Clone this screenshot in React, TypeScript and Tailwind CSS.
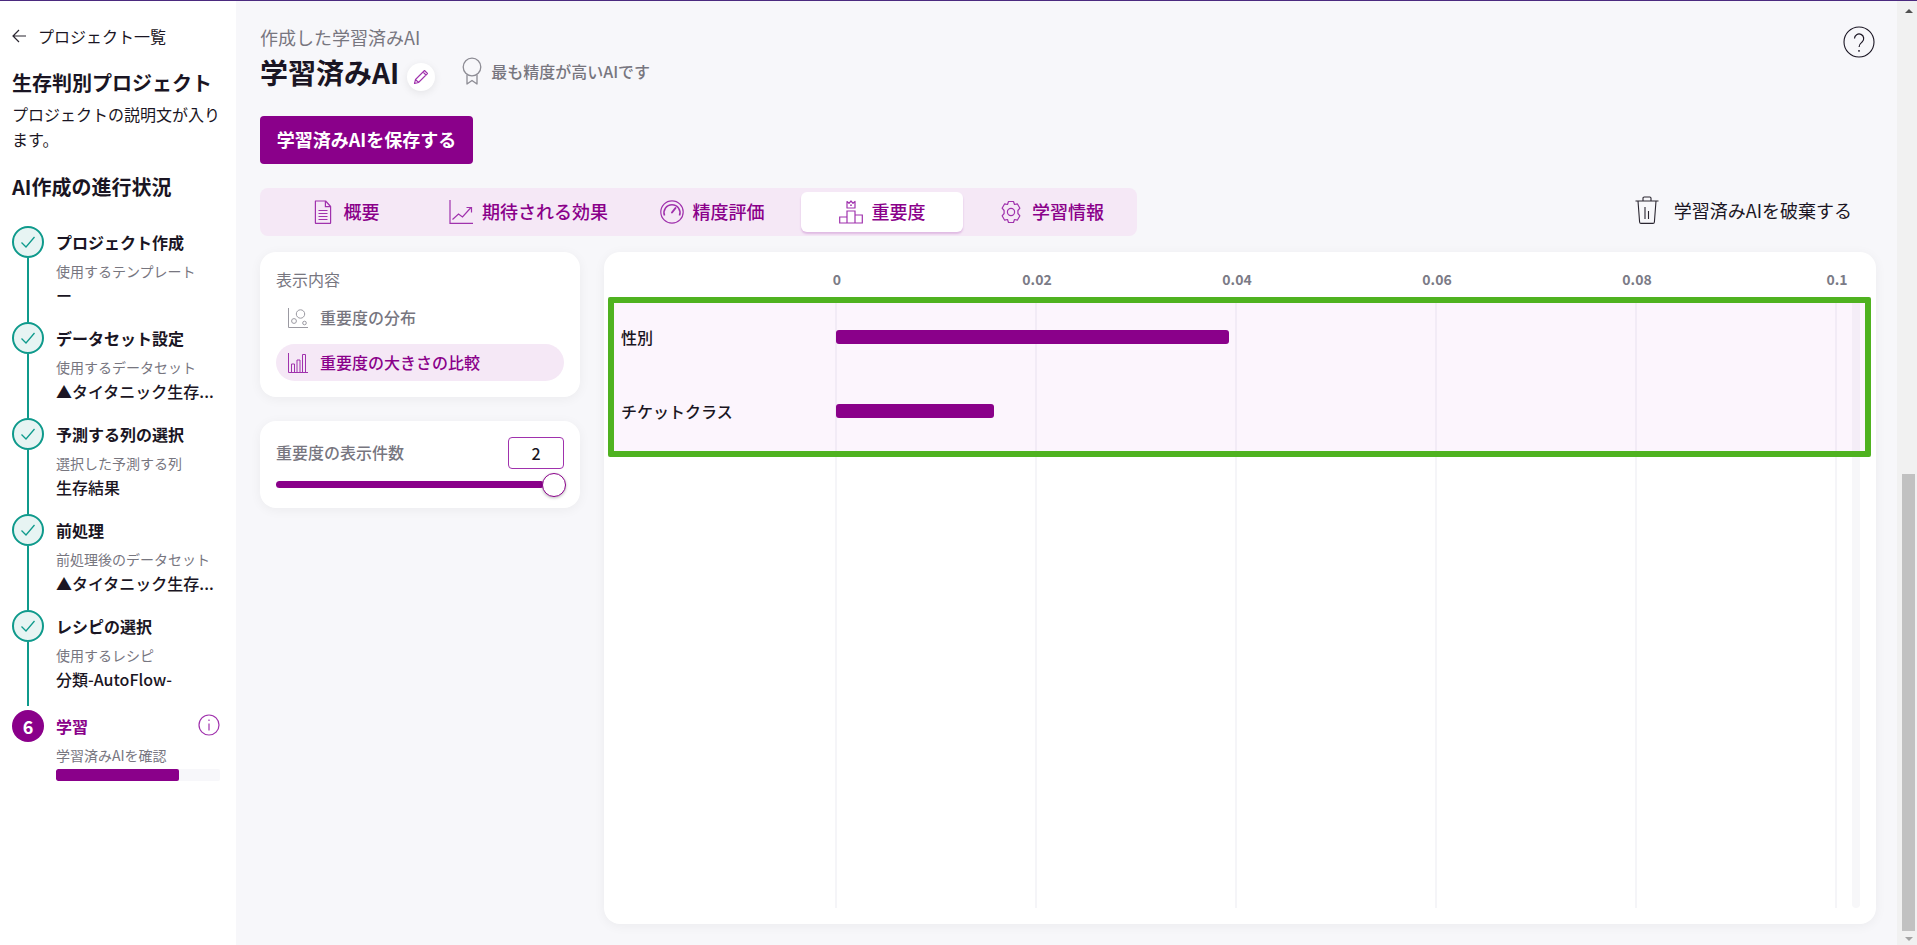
import type { ReactNode } from 'react'

const FONT = '[font-family:"Noto_Sans_CJK_JP","Noto_Sans",sans-serif]'

function DocIcon() {
  return (
    <svg width="24" height="24" viewBox="0 0 24 24" fill="none" stroke="#a032ad" strokeWidth="1.2">
      <path d="M4.6 1h10l5 5.5v16.3a.6.6 0 0 1-.6.6H5a.6.6 0 0 1-.6-.6V1.2z" strokeLinejoin="round" />
      <path d="M14.4 1v5.6h5.2M7.5 10.5h9M7.5 13.5h9M7.5 16.5h9M7.5 19.5h9" />
    </svg>
  )
}

function LineChartIcon() {
  return (
    <svg width="24" height="24" viewBox="0 0 24 24" fill="none" stroke="#a032ad" strokeWidth="1.2">
      <path d="M1 0v23.4h23" />
      <path d="M3.5 19.5l6-5.5 4 3 8.5-9.5M17.5 7.5h5v5" />
    </svg>
  )
}

function GaugeIcon() {
  return (
    <svg width="24" height="24" viewBox="0 0 24 24" fill="none" stroke="#a032ad" strokeWidth="1.2">
      <circle cx="12" cy="12" r="11.2" />
      <path d="M4.5 15.5a8 8 0 1 1 15 0" strokeWidth="1.6" />
      <path d="M12 12.5l3.5-4.5" strokeWidth="2" strokeLinecap="round" />
    </svg>
  )
}

function PodiumIcon() {
  return (
    <svg width="24" height="24" viewBox="0 0 24 24" fill="none" stroke="#a032ad" strokeWidth="1.2">
      <path d="M8 1.5l2 1.8L12 1l2 2.3 2-1.8V8H8z" strokeLinejoin="round" />
      <circle cx="12" cy="5.2" r=".9" fill="#a032ad" stroke="none" />
      <path d="M8 11h8v12H8zM.7 17H8v6H.7zM16 15h7.3v8H16z" />
    </svg>
  )
}

function GearIcon() {
  return (
    <svg width="24" height="24" viewBox="0 0 24 24" fill="none" stroke="#a032ad" strokeWidth="1.2">
      <path
        d="M9.5 1.5h5l1 3 2.8-.7 2.6 4.4-2 2.3v3l2 2.3-2.6 4.4-2.8-.7-1 3h-5l-1-3-2.8.7-2.6-4.4 2-2.3v-3l-2-2.3 2.6-4.4 2.8.7z"
        strokeLinejoin="round"
      />
      <circle cx="12" cy="12" r="3.6" />
    </svg>
  )
}

function CheckCircle() {
  return (
    <div className="w-8 h-8 shrink-0 rounded-full border-2 border-[#0f9a8c] bg-[#e7f4f3] flex items-center justify-center">
      <svg width="18" height="18" viewBox="0 0 18 18" fill="none" stroke="#0f9a8c" strokeWidth="1.3">
        <path d="M2.5 9.5l4.5 4.5 8.5-10" />
      </svg>
    </div>
  )
}

type StepProps = { title: string; sub: string; value: string; last?: boolean }

function Step({ title, sub, value, last }: StepProps) {
  return (
    <div className={`flex gap-3 ${last ? 'h-[100px]' : 'h-24'}`}>
      <div className={`w-8 flex flex-col items-center ${last ? 'pb-1' : ''}`}>
        <CheckCircle />
        <div className="w-[2px] flex-1 bg-[#0f9a8c]" />
      </div>
      <div className="w-[164px] pt-1">
        <div className="text-base font-bold leading-6 text-[#1a1523]">{title}</div>
        <div className="mt-[7px] text-sm leading-5 text-[#77767f]">{sub}</div>
        <div className="mt-[2px] text-base font-medium leading-6 text-[#1a1523] whitespace-nowrap">{value}</div>
      </div>
    </div>
  )
}

function Sidebar() {
  return (
    <aside className="w-[236px] shrink-0 bg-white pl-3 pr-3 pt-[23px]">
      <div className="flex items-center h-6 gap-[11px]">
        <svg width="15" height="14" viewBox="0 0 15 14" fill="none" stroke="#2a2630" strokeWidth="1.2">
          <path d="M14 7H1M7 1L1 7l6 6" />
        </svg>
        <span className="text-base leading-6 text-[#1a1523]">プロジェクト一覧</span>
      </div>
      <h2 className="mt-[19px] text-xl font-bold leading-8 text-[#1a1523]">生存判別プロジェクト</h2>
      <p className="mt-[3px] text-base leading-[25px] text-[#1a1523]">プロジェクトの説明文が入ります。</p>
      <h3 className="mt-5 text-xl font-bold leading-[30px] text-[#1a1523]">AI作成の進行状況</h3>
      <div className="mt-6">
        <Step title="プロジェクト作成" sub="使用するテンプレート" value="ー" />
        <Step title="データセット設定" sub="使用するデータセット" value="▲タイタニック生存..." />
        <Step title="予測する列の選択" sub="選択した予測する列" value="生存結果" />
        <Step title="前処理" sub="前処理後のデータセット" value="▲タイタニック生存..." />
        <Step title="レシピの選択" sub="使用するレシピ" value="分類-AutoFlow-" last />
        <div className="flex gap-3">
          <div className="w-8 h-8 shrink-0 rounded-full bg-[#8a008a] text-white text-lg font-bold flex items-center justify-center">
            6
          </div>
          <div className="w-[164px] pt-1">
            <div className="flex items-center justify-between h-6">
              <span className="text-base font-bold leading-6 text-[#8a008a]">学習</span>
              <svg width="22" height="22" viewBox="0 0 22 22" fill="none" stroke="#a032ad" strokeWidth="1.2" className="-mt-[2px]">
                <circle cx="11" cy="11" r="10" />
                <path d="M11 9.5v7M11 5.5v1.6" />
              </svg>
            </div>
            <div className="mt-[7px] text-sm leading-5 text-[#77767f]">学習済みAIを確認</div>
            <div className="mt-[4px] h-3 rounded-[2px] bg-[#f7f7fa] overflow-hidden">
              <div className="h-full w-[123px] rounded-[2px] bg-[#8a008a]" />
            </div>
          </div>
        </div>
      </div>
    </aside>
  )
}

type TabProps = { icon: ReactNode; label: string; width: string; active?: boolean }

function Tab({ icon, label, width, active }: TabProps) {
  return (
    <div
      className={`${width} h-10 flex items-center justify-center gap-[9px] rounded-md text-lg font-medium text-[#8a008a] ${
        active ? 'bg-white shadow-[0_2px_2px_rgba(160,50,173,0.25)]' : ''
      }`}
    >
      {icon}
      <span className="pb-[2px]">{label}</span>
    </div>
  )
}

function Header() {
  return (
    <div className="flex justify-between">
      <div>
        <div className="text-lg leading-[26px] text-[#77767f]">作成した学習済みAI</div>
        <div className="flex items-center h-10 mt-[2px]">
          <h1 className="text-[28px] font-bold leading-10 text-[#1a1523]">学習済みAI</h1>
          <div className="ml-2 mt-[10px] w-7 h-7 rounded-full bg-white shadow-[0_2px_8px_rgba(0,0,0,0.08)] flex items-center justify-center">
            <svg width="16" height="16" viewBox="0 0 16 16" fill="none" stroke="#a032ad" strokeWidth="1.1">
              <path d="M1.5 14.5l1-4L11.5 1.5l3 3-9 9zM2.5 10.5l3 3M10 3l3 3" strokeLinejoin="round" />
            </svg>
          </div>
          <svg width="22" height="28" viewBox="0 0 22 28" fill="none" stroke="#8d8c94" strokeWidth="1.3" className="ml-[26px] -mt-[2px]">
            <circle cx="11" cy="10" r="8.8" />
            <path d="M6 17.5V27l5-3.5 5 3.5v-9.5" strokeLinejoin="round" />
          </svg>
          <span className="ml-2 pb-[2px] text-base font-medium text-[#77767f]">最も精度が高いAIです</span>
        </div>
        <button className="mt-6 w-[213px] h-12 pb-[3px] rounded bg-[#8a008a] text-white text-lg font-bold">
          学習済みAIを保存する
        </button>
      </div>
      <svg width="32" height="32" viewBox="0 0 32 32" fill="none" stroke="#1a1523" strokeWidth="1.1" className="mt-[2px] mr-[1px]">
        <circle cx="16" cy="16" r="15" />
        <path d="M11.5 12.5a4.6 4.6 0 1 1 7.6 3.5c-1.8 1.5-3 2.4-3 5" strokeWidth="1.2" />
        <path d="M16 24v1.8" strokeWidth="1.4" />
      </svg>
    </div>
  )
}

function Tabs() {
  return (
    <div className="mt-6 flex items-center justify-between">
      <div className="h-12 w-[877px] rounded-lg bg-[#f5e8f6] p-1 flex gap-2">
        <Tab icon={<DocIcon />} label="概要" width="w-[162px]" />
        <Tab icon={<LineChartIcon />} label="期待される効果" width="w-[189px]" />
        <Tab icon={<GaugeIcon />} label="精度評価" width="w-[162px]" />
        <Tab icon={<PodiumIcon />} label="重要度" width="w-[162px]" active />
        <Tab icon={<GearIcon />} label="学習情報" width="w-[161px]" />
      </div>
      <div className="flex items-center gap-[15px] mr-[24px] pb-1 text-lg text-[#1a1523]">
        <svg width="24" height="28" viewBox="0 0 24 28" fill="none" stroke="#2a2630" strokeWidth="1.1">
          <path d="M0.5 5h23M8 5V2.2Q8 1 9.2 1h5.6Q16 1 16 2.2V5M3 5l1.6 21q.1 1.4 1.4 1.4h12q1.3 0 1.4-1.4L21 5" />
          <path d="M10 11v12M13.5 15v8" />
        </svg>
        <span>学習済みAIを破棄する</span>
      </div>
    </div>
  )
}

function DisplayPanel() {
  return (
    <div className="rounded-2xl bg-white px-4 pt-[15px] pb-4 shadow-[0_2px_12px_rgba(0,0,0,0.05)]">
      <div className="text-base leading-6 text-[#77767f]">表示内容</div>
      <div className="mt-2 h-[37px] flex items-center gap-3 pl-3 text-base font-medium text-[#77767f]">
        <svg width="20" height="20" viewBox="0 0 20 20" fill="none" stroke="#9b9aa2" strokeWidth="1">
          <path d="M.5 0v19.5H20" />
          <circle cx="12.5" cy="6" r="4.2" />
          <circle cx="6" cy="13" r="2.4" />
          <circle cx="16.5" cy="15" r="1.8" />
        </svg>
        <span className="pb-[2px]">重要度の分布</span>
      </div>
      <div className="mt-2 h-[37px] flex items-center gap-3 pl-3 rounded-full bg-[#f5e8f6] text-base font-medium text-[#8a008a]">
        <svg width="20" height="20" viewBox="0 0 20 20" fill="none" stroke="#a032ad" strokeWidth="1">
          <path d="M.5 0v19.5H20" />
          <path d="M3.5 11h3v8.5h-3zM9 7h3v12.5H9zM14.5 1.5h3v18h-3z" />
        </svg>
        <span className="pb-[2px]">重要度の大きさの比較</span>
      </div>
    </div>
  )
}

function CountPanel() {
  return (
    <div className="rounded-2xl bg-white px-4 pt-4 pb-[11px] shadow-[0_2px_12px_rgba(0,0,0,0.05)]">
      <div className="flex items-center justify-between">
        <span className="pb-[2px] text-base font-medium text-[#77767f]">重要度の表示件数</span>
        <div className="w-14 h-8 rounded border border-[#a032ad] flex items-center justify-center text-base font-medium text-[#1a1523]">
          2
        </div>
      </div>
      <div className="mt-1 h-6 flex items-center -mr-[2px]">
        <div className="flex-1 h-[7px] mb-[1px] rounded-full bg-[#8a008a]" />
        <div className="-ml-[2px] w-6 h-6 rounded-full bg-white border border-[#8a008a] shadow-[0_1px_3px_rgba(0,0,0,0.25)]" />
      </div>
    </div>
  )
}

const TICKS = ['0', '0.02', '0.04', '0.06', '0.08', '0.1']

function Chart() {
  return (
    <div className="relative flex-1 h-[672px] rounded-2xl bg-white shadow-[0_2px_12px_rgba(0,0,0,0.05)] overflow-hidden">
      {/* 目盛り */}
      <div className="h-[45px] pl-[133px] pt-[17px] flex">
        {TICKS.map((t) => (
          <div key={t} className="w-[200px] shrink-0 text-center text-sm font-semibold leading-5 text-[#7b7b86]">
            {t}
          </div>
        ))}
      </div>

      <div className="ml-1 w-[1263px] h-40 pt-[3px] bg-[#fcf5fd]">
        <div className="h-[74px] pl-[13px] flex items-center">
          <span className="w-[215px] text-base font-medium text-[#1a1523]">性別</span>
          <div className="relative z-10 w-[393px] h-[14px] rounded-[3px] bg-[#8a008a]" />
        </div>
        <div className="h-[74px] pl-[13px] flex items-center">
          <span className="w-[215px] text-base font-medium text-[#1a1523]">チケットクラス</span>
          <div className="relative z-10 w-[158px] h-[14px] rounded-[3px] bg-[#8a008a]" />
        </div>
      </div>

      {/* グリッド線 */}
      <div className="absolute top-[45px] bottom-4 left-[231px] w-[2px] bg-[#1a1a5a]/[.045]" />
      <div className="absolute top-[45px] bottom-4 left-[431px] w-[2px] bg-[#1a1a5a]/[.045]" />
      <div className="absolute top-[45px] bottom-4 left-[631px] w-[2px] bg-[#1a1a5a]/[.045]" />
      <div className="absolute top-[45px] bottom-4 left-[831px] w-[2px] bg-[#1a1a5a]/[.045]" />
      <div className="absolute top-[45px] bottom-4 left-[1031px] w-[2px] bg-[#1a1a5a]/[.045]" />
      <div className="absolute top-[45px] bottom-4 left-[1231px] w-[2px] bg-[#1a1a5a]/[.045]" />
      <div className="absolute top-[45px] bottom-4 left-[1248px] w-2 rounded-b bg-[#1a1a5a]/[.035]" />

      {/* 強調枠 */}
      <div className="absolute top-[45px] left-1 w-[1263px] h-40 rounded-[2px] border-[6px] border-[#4fb220]" />
    </div>
  )
}

function Scrollbar() {
  return (
    <div className="w-5 shrink-0 bg-[#f1f1f1] flex flex-col items-center pl-[5px] pr-[2px]">
      <div className="h-[19px] flex items-center justify-center">
        <div className="w-0 h-0 border-x-[4px] border-x-transparent border-b-[4px] border-b-[#505050]" />
      </div>
      <div className="w-[13px] h-[457px] mt-[454px] bg-[#c1c1c1]" />
      <div className="mt-[2px] h-3 flex items-center justify-center">
        <div className="w-0 h-0 border-x-[4px] border-x-transparent border-t-[4px] border-t-[#a3a3a3]" />
      </div>
    </div>
  )
}

export default function App() {
  return (
    <div className={`h-screen overflow-hidden flex flex-col bg-[#f7f7fa] ${FONT}`}>
      <div className="h-px shrink-0 bg-[#4b2a7f]" />
      <div className="flex flex-1 min-h-0">
        <Sidebar />
        <main className="flex-1 min-w-0 pl-6 pr-[21px] pt-[23px]">
          <Header />
          <Tabs />
          <div className="mt-4 flex gap-6">
            <div className="w-80 shrink-0 flex flex-col gap-6">
              <DisplayPanel />
              <CountPanel />
            </div>
            <Chart />
          </div>
        </main>
        <Scrollbar />
      </div>
    </div>
  )
}
